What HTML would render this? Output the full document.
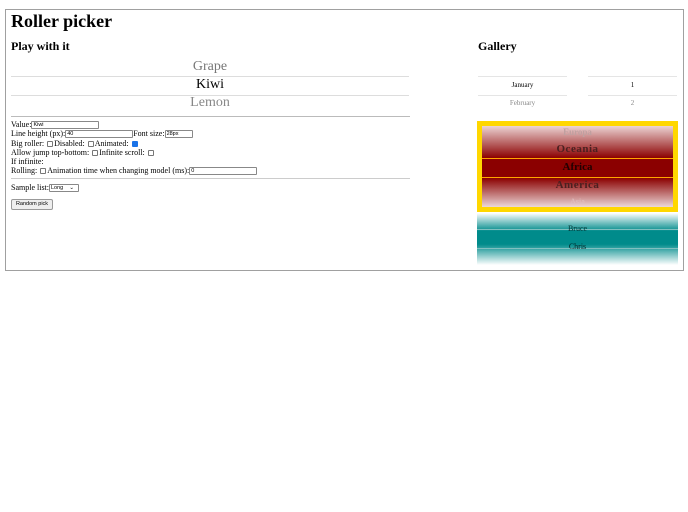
<!DOCTYPE html>
<html><head><style>
body{margin:0;background:#fff;font-family:"Liberation Serif",serif;color:#000}
.a{position:absolute}
.box{left:5px;top:9px;width:677px;height:260px;border:1px solid #a0a0a0}
h1{position:absolute;left:11px;top:11px;margin:0;font-size:18px;font-weight:bold;font-family:"Liberation Serif",serif}
h2{position:absolute;margin:0;font-size:12px;font-weight:bold;font-family:"Liberation Serif",serif}
.ln{position:absolute;height:1px;background:#ddd}
.c{position:absolute;text-align:center}
.f{position:absolute;left:11px;font-size:8px;line-height:9px;white-space:nowrap}
.in{display:inline-block;box-sizing:border-box;font-family:"Liberation Sans",sans-serif;font-size:5.5px;line-height:6px;height:8px;padding:0 1px;border:1px solid #888;vertical-align:middle;border-radius:1px}
.cb{display:inline-block;box-sizing:border-box;width:6px;height:6px;border:1px solid #777;border-radius:1px;margin:0 1px;vertical-align:middle}
.cb.on{background:#1a73e8;border-color:#1a73e8}
</style></head><body>
<div class="a box"></div>
<h1>Roller picker</h1>
<h2 style="left:11px;top:39px">Play with it</h2>
<h2 style="left:478px;top:39px">Gallery</h2>
<div class="c" style="left:11px;width:398px;top:59px;font-size:14px;color:#777">Grape</div>
<div class="ln" style="left:11px;width:398px;top:76px"></div>
<div class="c" style="left:11px;width:398px;top:77px;font-size:14px">Kiwi</div>
<div class="ln" style="left:11px;width:398px;top:95px"></div>
<div class="c" style="left:11px;width:398px;top:95px;font-size:14px;color:#888">Lemon</div>
<div class="ln" style="left:11px;width:399px;top:116px;background:#bbb"></div>
<div class="f" style="top:120px">Value:<span class="in" style="width:68px">Kiwi</span></div>
<div class="f" style="top:129px">Line height (px):<span class="in" style="width:68px">40</span>Font size:<span class="in" style="width:28px">28px</span></div>
<div class="f" style="top:139px">Big roller: <span class="cb"></span>Disabled: <span class="cb"></span>Animated: <span class="cb on"></span></div>
<div class="f" style="top:148px">Allow jump top-bottom: <span class="cb"></span>Infinite scroll: <span class="cb"></span></div>
<div class="f" style="top:157px">If infinite:</div>
<div class="f" style="top:166px">Rolling: <span class="cb"></span>Animation time when changing model (ms):<span class="in" style="width:68px">0</span></div>
<div class="ln" style="left:11px;width:399px;top:178px;background:#ccc"></div>
<div class="f" style="top:183px">Sample list:<span class="in" style="width:30px">Long &nbsp;&nbsp;&nbsp;⌄</span></div>
<div class="a" style="left:11px;top:199px;width:40px;height:9px;border:1px solid #999;border-radius:2px;background:#eee;font-family:'Liberation Sans',sans-serif;font-size:5.5px;line-height:9px;text-align:center">Random pick</div>

<div class="ln" style="left:478px;width:89px;top:76px;background:#e5e5e5"></div>
<div class="ln" style="left:478px;width:89px;top:95px;background:#e5e5e5"></div>
<div class="ln" style="left:588px;width:89px;top:76px;background:#e5e5e5"></div>
<div class="ln" style="left:588px;width:89px;top:95px;background:#e5e5e5"></div>
<div class="c" style="left:478px;width:89px;top:81px;font-size:7px">January</div>
<div class="c" style="left:478px;width:89px;top:99px;font-size:7px;color:#888">February</div>
<div class="c" style="left:588px;width:89px;top:81px;font-size:7px">1</div>
<div class="c" style="left:588px;width:89px;top:99px;font-size:7px;color:#888">2</div>

<div class="a" style="left:477px;top:121px;width:201px;height:91px;background:#ffd700"></div>
<div class="a" style="left:482px;top:126px;width:191px;height:32px;background:linear-gradient(#ecd4d4,#8b0000)"></div>
<div class="a" style="left:482px;top:158px;width:191px;height:20px;background:#8b0000;border-top:1px solid #ffa500;border-bottom:1px solid #ffa500;box-sizing:border-box"></div>
<div class="a" style="left:482px;top:178px;width:191px;height:29px;background:linear-gradient(#8b0000,#ecd8d8)"></div>
<div class="c" style="left:482px;width:191px;top:127px;font-size:9px;color:#c0a0a0;font-weight:bold">Europa</div>
<div class="c" style="left:482px;width:191px;top:143px;font-size:11px;color:#4a2020;font-weight:bold;letter-spacing:.5px">Oceania</div>
<div class="c" style="left:482px;width:191px;top:161px;font-size:11px;color:#200;font-weight:bold">Africa</div>
<div class="c" style="left:482px;width:191px;top:179px;font-size:11px;color:#4a2020;font-weight:bold;letter-spacing:.5px">America</div>
<div class="c" style="left:482px;width:191px;top:197px;font-size:8px;color:#e0c0c0">Asia</div>

<div class="a" style="left:477px;top:213px;width:201px;height:52px;background:linear-gradient(#fff,#008b8b 35%,#008b8b 60%,#fff)"></div>
<div class="ln" style="left:477px;width:201px;top:229px;background:#80c0c0"></div>
<div class="ln" style="left:477px;width:201px;top:248px;background:#80c0c0"></div>
<div class="c" style="left:477px;width:201px;top:224px;font-size:8px;color:#033">Bruce</div>
<div class="c" style="left:477px;width:201px;top:242px;font-size:8px;color:#022">Chris</div>
</body></html>
